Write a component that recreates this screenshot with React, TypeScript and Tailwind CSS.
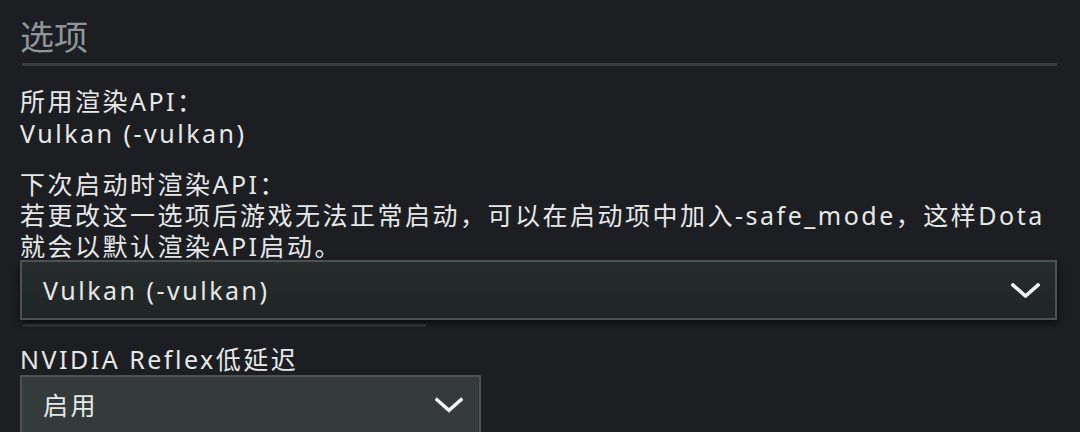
import React from "react";

function Chevron({ w = 29, h = 15 }: { w?: number; h?: number }) {
  return (
    <svg width={w} height={h} viewBox="0 0 29 15" fill="none">
      <polyline points="2,2 14.5,13 27,2" stroke="#f2f2f2" strokeWidth="3.6" strokeLinecap="square" strokeLinejoin="miter" />
    </svg>
  );
}

export default function App() {
  const font = { fontFamily: '"Noto Sans", "Noto Sans CJK SC", sans-serif' };
  return (
    <div className="w-[1080px] h-[432px] overflow-hidden bg-[#1d1e22] text-[#e6e8e8]" style={font}>
      <div className="pl-[20px] pr-[23px] flex flex-col">
        <div className="mt-[17px] text-[34px] leading-[40px] text-[#8d9797]">选项</div>
        <div className="mt-[6px] ml-[2px] h-[3px] bg-[#3a3b3e]" />

        <div className="mt-[19px] text-[25px] leading-[32px] tracking-[2.5px] whitespace-nowrap">
          <div>所用渲染API：</div>
          <div>Vulkan (-vulkan)</div>
        </div>

        <div className="mt-[20px] text-[25px] leading-[31px] tracking-[2.5px] whitespace-nowrap">
          <div>下次启动时渲染API：</div>
          <div>若更改这一选项后游戏无法正常启动，可以在启动项中加入-safe_mode，这样Dota</div>
          <div>就会以默认渲染API启动。</div>
        </div>

        <div className="mt-[-2px] h-[60px] w-[1037px] border-2 border-[#4a5352] bg-gradient-to-b from-[#272c2d] to-[#1f2424] shadow-[0_3px_6px_rgba(0,0,0,0.6)] flex items-center justify-between pl-[21px] pr-[15px]">
          <span className="text-[25px] tracking-[2.5px] leading-[32px]">Vulkan (-vulkan)</span>
          <Chevron />
        </div>
        <div className="mt-[4px] ml-[3px] h-[3px] w-[403px] bg-[#2a2c2f]" />

        <div className="mt-[16px] text-[25px] leading-[32px] tracking-[2.5px] whitespace-nowrap">NVIDIA Reflex低延迟</div>

        <div className="h-[60px] w-[461px] border-2 border-[#4b5352] bg-[#353a3a] flex items-center justify-between pl-[21px] pr-[16px]">
          <span className="text-[25px] tracking-[2.5px] leading-[32px]">启用</span>
          <Chevron w={28} h={16} />
        </div>
      </div>
    </div>
  );
}
